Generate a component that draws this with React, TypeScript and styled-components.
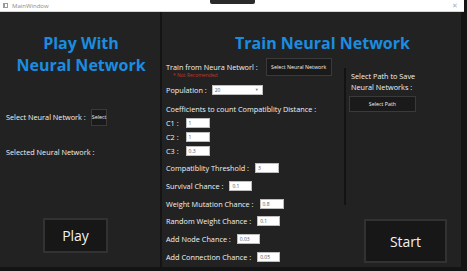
import React from 'react';
import styled, { createGlobalStyle } from 'styled-components';

const Global = createGlobalStyle`
  html, body {
    margin: 0;
    padding: 0;
    background: #141414;
    width: 467px;
    height: 271px;
    overflow: hidden;
  }
  * { box-sizing: border-box; }
`;

const Window = styled.div`
  position: relative;
  width: 464px;
  height: 267px;
  display: flex;
  flex-direction: column;
  background: #222222;
  font-family: "Open Sans", "Noto Sans", sans-serif;
  color: #f2f2f2;
`;

const TitleBar = styled.div`
  height: 12px;
  background: #ffffff;
  border-bottom: 1px solid #d6d6d6;
  display: flex;
  align-items: center;
  padding: 0 3px;
  gap: 4px;
  font-size: 6px;
  color: #8a8a8a;
`;

const AppIcon = styled.div`
  width: 5px;
  height: 5px;
  border: 1px solid #9a9a9a;
  border-left-width: 2px;
`;

const Close = styled.span`
  margin-left: auto;
  margin-right: 3px;
  font-size: 7px;
  color: #b0b0b0;
`;

const SnipBar = styled.div`
  position: absolute;
  left: 210px;
  top: 0;
  width: 45px;
  height: 4px;
  background: #2a2a2a;
  border-radius: 0 0 2px 2px;
`;

const Main = styled.div`
  flex: 1;
  display: flex;
`;

const LeftPanel = styled.div`
  width: 162px;
  display: flex;
  flex-direction: column;
  border-right: 2px solid #141414;
`;

const Heading = styled.h1`
  margin: 0;
  font-family: "Open Sans", "Noto Sans", sans-serif;
  font-weight: 700;
  font-size: 16px;
  line-height: 22px;
  color: #1b8de0;
  text-align: center;
  white-space: nowrap;
`;

const LeftHeading = styled(Heading)`
  padding-top: 20px;
  padding-left: 2px;
`;

const Label = styled.span`
  font-size: 7.3px;
  line-height: 10px;
  white-space: nowrap;
`;

const LeftRow = styled.div<{ $top: number }>`
  display: flex;
  align-items: center;
  gap: 5px;
  padding-left: 6px;
  margin-top: ${p => p.$top}px;
  height: 18px;
`;

const SmallButton = styled.button<{ $w: number; $h: number }>`
  width: ${p => p.$w}px;
  height: ${p => p.$h}px;
  padding: 0;
  background: #1a1a1a;
  border: 1px solid #3a3a3a;
  color: #f2f2f2;
  font-family: "Open Sans", "Noto Sans", sans-serif;
  font-size: 5.3px;
  white-space: nowrap;
`;

const BigButton = styled.button<{ $w: number; $h: number }>`
  width: ${p => p.$w}px;
  height: ${p => p.$h}px;
  background: #171717;
  border: 2px solid #323232;
  color: #f2f2f2;
  font-family: "Open Sans", "Noto Sans", sans-serif;
  font-size: 14px;
  padding: 0;
`;

const PlayWrap = styled.div`
  display: flex;
  margin-top: auto;
  margin-bottom: 14px;
  padding-left: 43px;
`;

const TrainArea = styled.div`
  flex: 1;
  display: flex;
  flex-direction: column;
  border-right: 3px solid #141414;
`;

const TrainHeading = styled(Heading)`
  padding-top: 20px;
  padding-left: 22px;
`;

const TrainBody = styled.div`
  flex: 1;
  display: flex;
`;

const Form = styled.div`
  width: 182px;
  display: flex;
  flex-direction: column;
  padding-left: 4px;
`;

const FieldRow = styled.div<{ $top: number; $gap?: number }>`
  display: flex;
  align-items: center;
  gap: ${p => p.$gap ?? 5}px;
  height: 10px;
  margin-top: ${p => p.$top}px;
`;

const Input = styled.div<{ $w: number }>`
  width: ${p => p.$w}px;
  height: 10px;
  background: #ffffff;
  border: 1px solid #bdbdbd;
  color: #555;
  font-size: 5px;
  line-height: 8px;
  padding-left: 2px;
`;

const Dropdown = styled(Input)`
  display: flex;
  align-items: center;
  justify-content: space-between;
  padding-right: 3px;
`;

const Caret = styled.span`
  font-size: 4px;
  color: #777;
`;

const TrainFromRow = styled.div`
  display: flex;
  align-items: flex-start;
  gap: 8px;
  margin-top: 4px;
  height: 20px;
`;

const LabelStack = styled.div`
  display: flex;
  flex-direction: column;
  padding-top: 4px;
`;

const Note = styled.span`
  font-size: 5px;
  line-height: 6px;
  color: #c0392b;
  padding-left: 7px;
`;

const Divider = styled.div`
  width: 2px;
  background: #131313;
  margin-top: 14px;
  height: 137px;
`;

const SavePanel = styled.div`
  flex: 1;
  display: flex;
  flex-direction: column;
  padding-left: 3px;
`;

const SaveText = styled.div`
  font-size: 7.3px;
  line-height: 11px;
  margin-top: 17px;
  padding-left: 2px;
`;

const SaveButtonWrap = styled.div`
  display: flex;
  margin-top: 3px;
`;

const StartWrap = styled.div`
  display: flex;
  margin-top: auto;
  margin-bottom: 4px;
  padding-left: 15px;
`;

const fields = [
  { label: 'Compatiblity Threshold :', value: '3', w: 24, top: 7 },
  { label: 'Survival Chance :', value: '0.1', w: 23, top: 8 },
  { label: 'Weight Mutation Chance :', value: '0.8', w: 24, top: 8 },
  { label: 'Random Weight Chance :', value: '0.1', w: 23, top: 7 },
  { label: 'Add Node Chance :', value: '0.03', w: 23, top: 8 },
  { label: 'Add Connection Chance :', value: '0.05', w: 23, top: 8 },
];

const coeffs = [
  { label: 'C1 :', value: '1', top: 4 },
  { label: 'C2 :', value: '1', top: 4 },
  { label: 'C3 :', value: '0.3', top: 4 },
];

export default function App() {
  return (
    <>
      <Global />
      <Window>
        <TitleBar>
          <AppIcon />
          <span>MainWindow</span>
          <Close>✕</Close>
        </TitleBar>
        <SnipBar />
        <Main>
          <LeftPanel>
            <LeftHeading>Play With<br />Neural Network</LeftHeading>
            <LeftRow $top={32}>
              <Label>Select Neural Network :</Label>
              <SmallButton $w={16} $h={17}>Select</SmallButton>
            </LeftRow>
            <LeftRow $top={17}>
              <Label>Selected Neural Network :</Label>
            </LeftRow>
            <PlayWrap>
              <BigButton $w={65} $h={35}>Play</BigButton>
            </PlayWrap>
          </LeftPanel>
          <TrainArea>
            <TrainHeading>Train Neural Network</TrainHeading>
            <TrainBody>
              <Form>
                <TrainFromRow>
                  <LabelStack>
                    <Label>Train from Neura Networl :</Label>
                    <Note>* Not Recomended</Note>
                  </LabelStack>
                  <SmallButton $w={66} $h={18}>Select Neural Network</SmallButton>
                </TrainFromRow>
                <FieldRow $top={7}>
                  <Label>Population :</Label>
                  <Dropdown $w={51}>20<Caret>▼</Caret></Dropdown>
                </FieldRow>
                <FieldRow $top={9}>
                  <Label>Coefficients to count Compatiblity Distance :</Label>
                </FieldRow>
                {coeffs.map(c => (
                  <FieldRow key={c.label} $top={c.top} $gap={7}>
                    <Label>{c.label}</Label>
                    <Input $w={24}>{c.value}</Input>
                  </FieldRow>
                ))}
                {fields.map(f => (
                  <FieldRow key={f.label} $top={f.top} $gap={6}>
                    <Label>{f.label}</Label>
                    <Input $w={f.w}>{f.value}</Input>
                  </FieldRow>
                ))}
              </Form>
              <Divider />
              <SavePanel>
                <SaveText>Select Path to Save<br />Neural Networks :</SaveText>
                <SaveButtonWrap>
                  <SmallButton $w={67} $h={16}>Select Path</SmallButton>
                </SaveButtonWrap>
                <StartWrap>
                  <BigButton $w={83} $h={44}>Start</BigButton>
                </StartWrap>
              </SavePanel>
            </TrainBody>
          </TrainArea>
        </Main>
      </Window>
    </>
  );
}
